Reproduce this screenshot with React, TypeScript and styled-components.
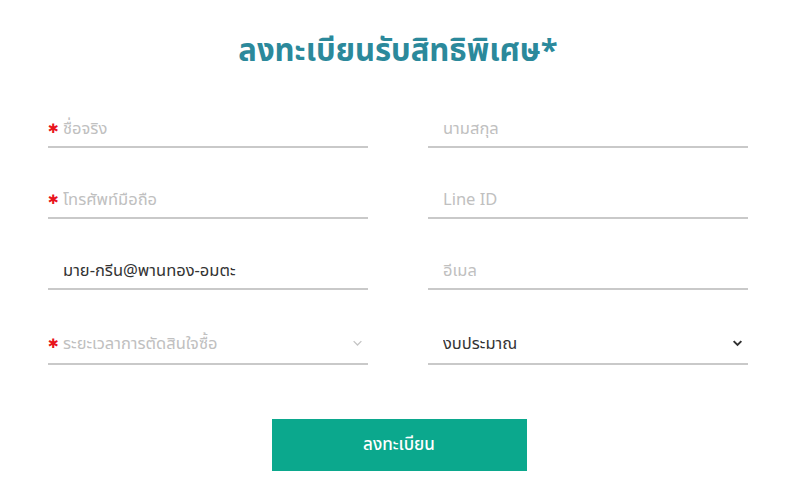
import React, {useState} from 'react';
import styled, {createGlobalStyle} from 'styled-components';

const GlobalStyle = createGlobalStyle`
    body {
        margin: 0;
        background: #ffffff;
        font-family: "Noto Sans Thai", "Noto Sans", "DejaVu Sans", sans-serif;
    }
`;

const Page = styled.div`
    width: 700px;
    margin: 0 auto;
    transform: translateX(-2px);
`;

const Title = styled.h1`
    margin: 30px 0 0;
    font-size: 31px;
    line-height: 44px;
    font-weight: 700;
    text-align: center;
    color: #2b899b;
`;

const Form = styled.form`
    margin-top: 32px;
    display: flex;
    flex-direction: column;
    align-items: center;
`;

const Grid = styled.div`
    width: 100%;
    display: grid;
    grid-template-columns: 320px 320px;
    column-gap: 60px;
    row-gap: 29px;
`;

const Field = styled.div`
    position: relative;
`;

const Star = styled.span`
    position: absolute;
    left: 0;
    top: 50%;
    transform: translateY(-35%);
    color: #e8141c;
    font-family: "DejaVu Sans", sans-serif;
    font-size: 13px;
    line-height: 1;
    pointer-events: none;
`;

const Input = styled.input`
    box-sizing: border-box;
    width: 100%;
    height: 42px;
    padding: 4px 0 0 15px;
    border: none;
    border-bottom: 2px solid #c9c9c9;
    background: transparent;
    font-family: inherit;
    font-size: 16.5px;
    color: #333;
    outline: none;

    &::placeholder {
        color: #c0c0c0;
    }
`;

const Select = styled.select<{$empty?: boolean}>`
    box-sizing: border-box;
    width: 100%;
    height: 46px;
    padding: 4px 30px 0 15px;
    border: none;
    border-bottom: 2px solid #c9c9c9;
    border-radius: 0;
    background: transparent;
    font-family: inherit;
    font-size: 16.5px;
    color: ${({$empty}) => ($empty ? '#c0c0c0' : '#333')};
    appearance: none;
    outline: none;
`;

const Chevron = styled.svg<{$light?: boolean}>`
    position: absolute;
    right: 5px;
    top: 50%;
    transform: translateY(-40%);
    width: 11px;
    height: 11px;
    color: ${({$light}) => ($light ? '#c4c4c4' : '#333')};
    pointer-events: none;
`;

const Submit = styled.button`
    margin-top: 54px;
    width: 255px;
    height: 52px;
    border: none;
    background: #0ba88d;
    color: #ffffff;
    font-family: inherit;
    font-size: 17px;
    font-weight: 500;
    cursor: pointer;
    transform: translateX(1px);
`;

const ChevronIcon: React.FC<{light?: boolean}> = ({light}) => (
    <Chevron $light={light} viewBox="0 0 10 10">
        <path d="M1.5 3.2 L5 6.7 L8.5 3.2" fill="none" stroke="currentColor" strokeWidth={light ? 1.2 : 1.8} />
    </Chevron>
);

export default function App() {
    const [timing, setTiming] = useState('');
    const [budget, setBudget] = useState('budget');

    return (
        <Page>
            <GlobalStyle />
            <Title>ลงทะเบียนรับสิทธิพิเศษ*</Title>
            <Form onSubmit={e => e.preventDefault()}>
                <Grid>
                    <Field>
                        <Star>✱</Star>
                        <Input placeholder="ชื่อจริง" />
                    </Field>
                    <Field>
                        <Input placeholder="นามสกุล" />
                    </Field>
                    <Field>
                        <Star>✱</Star>
                        <Input placeholder="โทรศัพท์มือถือ" />
                    </Field>
                    <Field>
                        <Input placeholder="Line ID" />
                    </Field>
                    <Field>
                        <Input defaultValue="มาย-กรีน@พานทอง-อมตะ" />
                    </Field>
                    <Field>
                        <Input placeholder="อีเมล" />
                    </Field>
                    <Field>
                        <Star>✱</Star>
                        <Select $empty={timing === ''} value={timing} onChange={e => setTiming(e.target.value)}>
                            <option value="">ระยะเวลาการตัดสินใจซื้อ</option>
                            <option value="1">ภายใน 1 เดือน</option>
                            <option value="3">ภายใน 3 เดือน</option>
                        </Select>
                        <ChevronIcon light />
                    </Field>
                    <Field>
                        <Select value={budget} onChange={e => setBudget(e.target.value)}>
                            <option value="budget">งบประมาณ</option>
                            <option value="a">1-2 ล้านบาท</option>
                            <option value="b">2-3 ล้านบาท</option>
                        </Select>
                        <ChevronIcon />
                    </Field>
                </Grid>
                <Submit type="submit">ลงทะเบียน</Submit>
            </Form>
        </Page>
    );
}
